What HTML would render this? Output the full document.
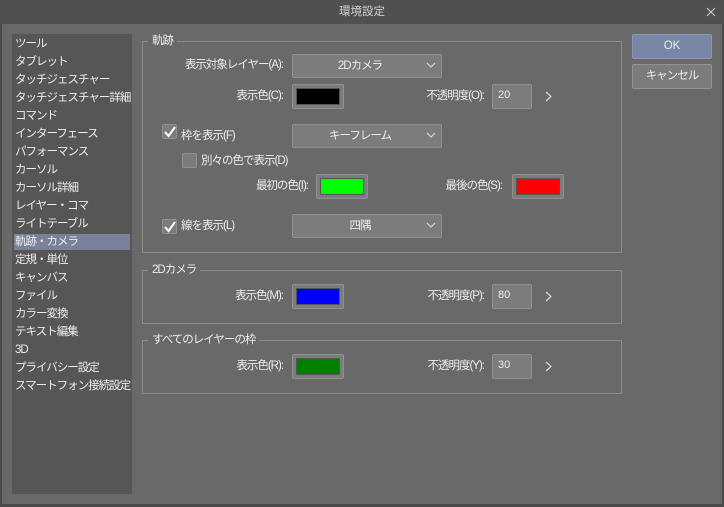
<!DOCTYPE html>
<html><head><meta charset="utf-8"><style>
*{margin:0;padding:0;box-sizing:border-box}
body{width:724px;height:507px;background:#4a4a4a;font-family:"Liberation Sans","Noto Sans CJK JP",sans-serif;font-size:11.5px;letter-spacing:-1px;color:#ececec;position:relative;overflow:hidden}
.a{position:absolute;white-space:nowrap}
#title{left:0;top:0;width:724px;height:24px;background:#505050;text-align:center;line-height:24px;color:#d0d0d0;letter-spacing:0}
#main{left:2px;top:24px;width:720px;height:480px;background:#696969}
#side{left:12px;top:34px;width:120px;height:460px;background:#565656}
.it{position:absolute;left:3px;height:16px;line-height:17px;white-space:nowrap}
.sel{background:#7a829a;width:116px;left:2px;padding-left:1px}
.grp{position:absolute;border:1px solid #8c8c8c}
.gt{position:absolute;background:#696969;padding:0 4px;line-height:14px;white-space:nowrap}
.lbl{position:absolute;text-align:right;line-height:16px;white-space:nowrap}
.dd{position:absolute;width:150px;height:24px;background:#7c7c7c;border:1px solid #909090;border-radius:2px;text-align:center;line-height:22px;padding-right:14px}
.dd svg{position:absolute;right:5px;top:7px}
.sw{position:absolute;width:52px;height:25px;background:#7c7c7c;border:1px solid #909090;border-radius:2px}
.sw i{position:absolute;left:3px;top:3px;right:3px;bottom:3px;border:1px solid #555}
.op{position:absolute;width:40px;height:25px;background:#7c7c7c;border:1px solid #909090;border-radius:2px;line-height:20px;padding-left:5px;font-size:11px;letter-spacing:0}
.ar{position:absolute}
.cb{position:absolute;width:15px;height:15px;background:#7c7c7c;border:1px solid #909090;border-radius:2px}
.btn{position:absolute;left:632px;width:80px;height:25px;border:1px solid #929292;border-radius:2px;text-align:center;line-height:23px}
</style></head><body>
<div class="a" id="title">環境設定</div>
<svg class="a" style="left:706px;top:7px" width="10" height="10"><path d="M1 1L9 9M9 1L1 9" stroke="#c8c8c8" stroke-width="1.2"/></svg>
<div class="a" id="main"></div>
<div class="a" id="side">
<div class="it" style="top:2px">ツール</div>
<div class="it" style="top:20px">タブレット</div>
<div class="it" style="top:38px">タッチジェスチャー</div>
<div class="it" style="top:56px">タッチジェスチャー詳細</div>
<div class="it" style="top:74px">コマンド</div>
<div class="it" style="top:92px">インターフェース</div>
<div class="it" style="top:110px">パフォーマンス</div>
<div class="it" style="top:128px">カーソル</div>
<div class="it" style="top:146px">カーソル詳細</div>
<div class="it" style="top:164px">レイヤー・コマ</div>
<div class="it" style="top:182px">ライトテーブル</div>
<div class="it sel" style="top:200px">軌跡・カメラ</div>
<div class="it" style="top:218px">定規・単位</div>
<div class="it" style="top:236px">キャンバス</div>
<div class="it" style="top:254px">ファイル</div>
<div class="it" style="top:272px">カラー変換</div>
<div class="it" style="top:290px">テキスト編集</div>
<div class="it" style="top:308px">3D</div>
<div class="it" style="top:326px">プライバシー設定</div>
<div class="it" style="top:344px">スマートフォン接続設定</div>
</div>

<div class="grp" style="left:142px;top:41px;width:480px;height:212px"></div>
<div class="gt" style="left:148px;top:34px">軌跡</div>
<div class="lbl" style="left:150px;width:133px;top:57px">表示対象レイヤー(A):</div>
<div class="dd" style="left:292px;top:54px">2Dカメラ<svg width="10" height="7"><path d="M1 1L5 5L9 1" stroke="#ddd" fill="none"/></svg></div>
<div class="lbl" style="left:150px;width:133px;top:88px">表示色(C):</div>
<div class="sw" style="left:292px;top:84px"><i style="background:#000"></i></div>
<div class="lbl" style="left:380px;width:104px;top:88px">不透明度(O):</div>
<div class="op" style="left:492px;top:84px">20</div>
<svg class="ar" style="left:545px;top:91px" width="8" height="11"><path d="M1 1L6 5.5L1 10" stroke="#ddd" fill="none" stroke-width="1.2"/></svg>

<div class="cb" style="left:162px;top:124px"></div>
<svg class="a" style="left:163px;top:125px" width="14" height="14"><path d="M2 7L5.5 11L12 2" stroke="#fff" stroke-width="2" fill="none"/></svg>
<div class="lbl" style="left:181px;top:128px">枠を表示(F)</div>
<div class="dd" style="left:292px;top:124px">キーフレーム<svg width="10" height="7"><path d="M1 1L5 5L9 1" stroke="#ddd" fill="none"/></svg></div>
<div class="cb" style="left:182px;top:153px"></div>
<div class="lbl" style="left:201px;top:153px">別々の色で表示(D)</div>
<div class="lbl" style="left:200px;width:108px;top:178px">最初の色(I):</div>
<div class="sw" style="left:316px;top:174px"><i style="background:#00ff00"></i></div>
<div class="lbl" style="left:400px;width:102px;top:178px">最後の色(S):</div>
<div class="sw" style="left:512px;top:174px"><i style="background:#ff0000"></i></div>
<div class="cb" style="left:162px;top:219px"></div>
<svg class="a" style="left:163px;top:220px" width="14" height="14"><path d="M2 7L5.5 11L12 2" stroke="#fff" stroke-width="2" fill="none"/></svg>
<div class="lbl" style="left:181px;top:218px">線を表示(L)</div>
<div class="dd" style="left:292px;top:214px">四隅<svg width="10" height="7"><path d="M1 1L5 5L9 1" stroke="#ddd" fill="none"/></svg></div>

<div class="grp" style="left:142px;top:270px;width:480px;height:54px"></div>
<div class="gt" style="left:148px;top:263px">2Dカメラ</div>
<div class="lbl" style="left:150px;width:133px;top:288px">表示色(M):</div>
<div class="sw" style="left:292px;top:284px"><i style="background:#0000ff"></i></div>
<div class="lbl" style="left:380px;width:104px;top:288px">不透明度(P):</div>
<div class="op" style="left:492px;top:284px">80</div>
<svg class="ar" style="left:545px;top:291px" width="8" height="11"><path d="M1 1L6 5.5L1 10" stroke="#ddd" fill="none" stroke-width="1.2"/></svg>

<div class="grp" style="left:142px;top:340px;width:480px;height:54px"></div>
<div class="gt" style="left:148px;top:333px">すべてのレイヤーの枠</div>
<div class="lbl" style="left:150px;width:133px;top:358px">表示色(R):</div>
<div class="sw" style="left:292px;top:354px"><i style="background:#008000"></i></div>
<div class="lbl" style="left:380px;width:104px;top:358px">不透明度(Y):</div>
<div class="op" style="left:492px;top:354px">30</div>
<svg class="ar" style="left:545px;top:361px" width="8" height="11"><path d="M1 1L6 5.5L1 10" stroke="#ddd" fill="none" stroke-width="1.2"/></svg>

<div class="btn" style="top:34px;background:#7a86a6;border-color:#8c96b4;letter-spacing:0">OK</div>
<div class="btn" style="top:64px;background:#7c7c7c">キャンセル</div>
</body></html>
